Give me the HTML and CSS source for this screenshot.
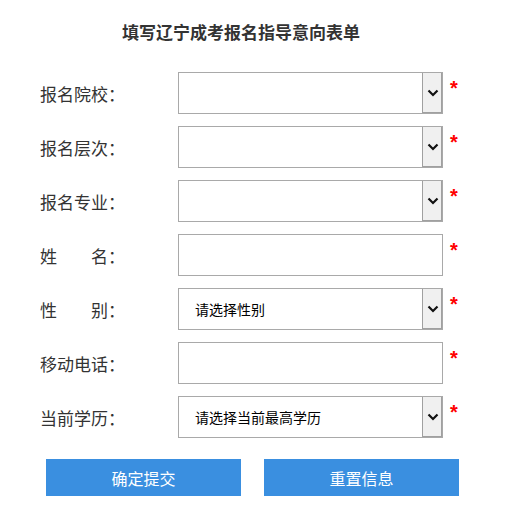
FILE: index.html
```html
<!DOCTYPE html>
<html lang="zh-CN">
<head>
<meta charset="utf-8">
<title>填写辽宁成考报名指导意向表单</title>
<link rel="stylesheet" href="styles.css">
</head>
<body>
<div class="page">
  <h1 class="title">填写辽宁成考报名指导意向表单</h1>
  <form class="form">
    <div class="row">
      <label class="label">报名院校：</label>
      <div class="select"><span class="select-text"></span><span class="select-btn"><svg width="12" height="8" viewBox="0 0 12 8"><polyline points="1.5,1.5 6,6 10.5,1.5" fill="none" stroke="#111" stroke-width="2.2"/></svg></span></div>
      <span class="req">*</span>
    </div>
    <div class="row">
      <label class="label">报名层次：</label>
      <div class="select"><span class="select-text"></span><span class="select-btn"><svg width="12" height="8" viewBox="0 0 12 8"><polyline points="1.5,1.5 6,6 10.5,1.5" fill="none" stroke="#111" stroke-width="2.2"/></svg></span></div>
      <span class="req">*</span>
    </div>
    <div class="row">
      <label class="label">报名专业：</label>
      <div class="select"><span class="select-text"></span><span class="select-btn"><svg width="12" height="8" viewBox="0 0 12 8"><polyline points="1.5,1.5 6,6 10.5,1.5" fill="none" stroke="#111" stroke-width="2.2"/></svg></span></div>
      <span class="req">*</span>
    </div>
    <div class="row">
      <label class="label">姓　　名：</label>
      <input class="input" type="text">
      <span class="req">*</span>
    </div>
    <div class="row">
      <label class="label">性　　别：</label>
      <div class="select"><span class="select-text">请选择性别</span><span class="select-btn"><svg width="12" height="8" viewBox="0 0 12 8"><polyline points="1.5,1.5 6,6 10.5,1.5" fill="none" stroke="#111" stroke-width="2.2"/></svg></span></div>
      <span class="req">*</span>
    </div>
    <div class="row">
      <label class="label">移动电话：</label>
      <input class="input" type="text">
      <span class="req">*</span>
    </div>
    <div class="row">
      <label class="label">当前学历：</label>
      <div class="select"><span class="select-text">请选择当前最高学历</span><span class="select-btn"><svg width="12" height="8" viewBox="0 0 12 8"><polyline points="1.5,1.5 6,6 10.5,1.5" fill="none" stroke="#111" stroke-width="2.2"/></svg></span></div>
      <span class="req">*</span>
    </div>
    <div class="actions">
      <button type="button" class="btn">确定提交</button>
      <button type="button" class="btn">重置信息</button>
    </div>
  </form>
</div>
</body>
</html>
```
FILE: styles.css
```css
html, body {
  margin: 0;
  padding: 0;
  background: #fff;
}
body {
  font-family: "Noto Sans CJK SC", "Noto Sans", sans-serif;
  color: #333;
}
.page {
  width: 506px;
}
.title {
  margin: 0;
  padding: 20px 0 0 122px;
  height: 24px;
  line-height: 24px;
  font-size: 17px;
  font-weight: bold;
  color: #333;
}
.form {
  margin: 28px 0 0 0;
  display: flex;
  flex-direction: column;
  gap: 12px;
}
.row {
  display: flex;
  align-items: center;
  height: 42px;
}
.label {
  flex: 0 0 178px;
  padding-left: 40px;
  box-sizing: border-box;
  font-size: 17px;
  color: #333;
  white-space: nowrap;
}
.select, .input {
  flex: 0 0 265px;
  width: 265px;
  height: 42px;
  box-sizing: border-box;
  border: 1px solid #a9a9a9;
  background: #fff;
}
.input {
  margin: 0;
  padding: 0 16px;
  font-family: inherit;
  font-size: 14px;
  outline: none;
}
.select {
  display: flex;
  align-items: stretch;
}
.select-text {
  flex: 1;
  display: flex;
  align-items: center;
  padding-left: 16px;
  font-size: 14px;
  color: #000;
}
.select-btn {
  width: 20px;
  box-sizing: border-box;
  background: #f0f0f0;
  border-left: 1px solid #a0a0a0;
  box-shadow: inset -1px -1px 0 #a0a0a0;
  display: flex;
  align-items: center;
  justify-content: center;
}
.select-btn svg {
  display: block;
}
.req {
  align-self: flex-start;
  margin: 6px 0 0 7px;
  font-family: "Liberation Sans", sans-serif;
  font-size: 20px;
  font-weight: bold;
  line-height: 20px;
  color: #f00;
}
.actions {
  display: flex;
  gap: 23px;
  padding-left: 46px;
  margin-top: 9px;
}
.btn {
  width: 195px;
  height: 37px;
  border: none;
  margin: 0;
  padding: 0;
  background: #3a8fe0;
  color: #fff;
  font-family: inherit;
  font-size: 16px;
}
```
